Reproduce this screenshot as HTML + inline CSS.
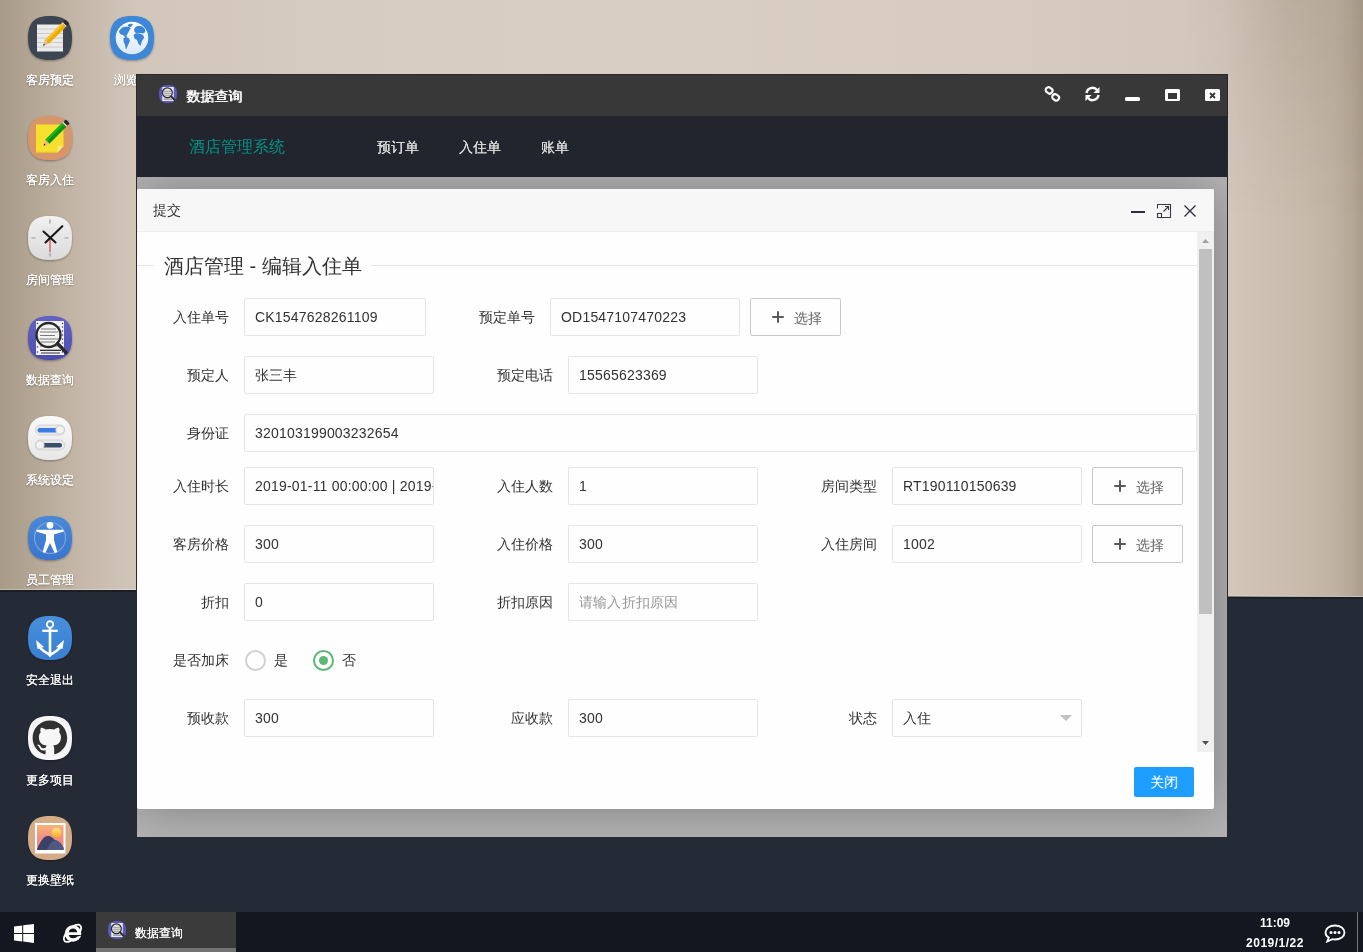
<!DOCTYPE html>
<html><head><meta charset="utf-8">
<style>
*{margin:0;padding:0;box-sizing:border-box}
html,body{width:1363px;height:952px;overflow:hidden}
body{position:relative;font-family:"Liberation Sans",sans-serif;background:#252b36;}
#root{position:absolute;left:0;top:0;width:1363px;height:952px;opacity:0.999}
.abs{position:absolute}
.dicon{position:absolute;left:28px;width:44px;height:44px;border-radius:14px}
.dlabel{position:absolute;left:10px;width:80px;text-align:center;color:#fff;font-size:12px;line-height:14px;text-shadow:0.4px 0 0 #fff,0 1px 2px rgba(0,0,0,.4)}
/* window */
#win{position:absolute;left:136px;top:74px;width:1092px;height:764px;background:#b5b5b5;border:1px solid #2a2a2a}
#wtitle{position:absolute;left:0;top:0;width:1090px;height:41px;background:#393939}
#wnav{position:absolute;left:0;top:41px;width:1090px;height:61px;background:#23262e}
#wbody{position:absolute;left:0;top:102px;width:1090px;height:660px;background:#b5b5b5}
/* dialog */
#dlg{position:absolute;left:137px;top:189px;width:1077px;height:620px;background:#fff;border-radius:2px;box-shadow:1px 1px 50px rgba(0,0,0,.3);clip-path:inset(-12px -13px -28px 0)}
#dhead{position:absolute;left:0;top:0;width:1077px;height:43px;background:#f8f8f8;border-bottom:1px solid #eee;border-radius:2px 2px 0 0}
.lbl{position:absolute;font-size:14px;color:#333;text-align:right;line-height:20px;white-space:nowrap}
.inp{position:absolute;letter-spacing:0.2px;height:38px;border:1px solid #e6e6e6;border-radius:2px;background:#fff;font-size:14px;color:#333;line-height:36px;padding-left:10px;white-space:nowrap;overflow:hidden}
.btn{position:absolute;height:38px;border:1px solid #c9c9c9;border-radius:2px;background:#fff;font-size:14px;color:#555;line-height:36px;}
#taskbar{position:absolute;left:0;top:912px;width:1363px;height:40px;background:#151820}
.plus{position:absolute;left:21px;top:12px;width:12px;height:12px}
.plus:before{content:"";position:absolute;left:0;top:5px;width:12px;height:2px;background:#5a5a5a;border-radius:1px}
.plus:after{content:"";position:absolute;left:5px;top:0;width:2px;height:12px;background:#5a5a5a;border-radius:1px}
.caret{position:absolute;left:167px;top:15px;width:0;height:0;border-left:6px solid transparent;border-right:6px solid transparent;border-top:6px solid #c2c2c2}
</style></head><body><div id="root">
<svg id="wallsvg" class="abs" style="left:0;top:0" width="1363" height="602" viewBox="0 0 1363 602"><defs><linearGradient id="wg" x1="0" y1="0" x2="1" y2="0"><stop offset="0%" stop-color="#a99b89"/><stop offset="2.2%" stop-color="#b3a694"/><stop offset="4.4%" stop-color="#bfb2a2"/><stop offset="7%" stop-color="#cabdb0"/><stop offset="10%" stop-color="#d3c7bc"/><stop offset="25%" stop-color="#d8cdc3"/><stop offset="45%" stop-color="#dacfc5"/><stop offset="70%" stop-color="#d9cdc2"/><stop offset="90%" stop-color="#d4c8bc"/><stop offset="95.4%" stop-color="#c9bcae"/><stop offset="98%" stop-color="#c0b3a3"/><stop offset="99.3%" stop-color="#b5a795"/><stop offset="100%" stop-color="#ab9d8b"/></linearGradient><linearGradient id="tr" x1="0" y1="0" x2="1" y2="0"><stop offset="0" stop-color="#3c2d1e" stop-opacity="0"/><stop offset="0.6" stop-color="#3c2d1e" stop-opacity=".1"/><stop offset="1" stop-color="#3c2d1e" stop-opacity=".06"/></linearGradient><linearGradient id="trm" x1="0" y1="0" x2="0" y2="1"><stop offset="0" stop-color="#fff"/><stop offset="1" stop-color="#000"/></linearGradient><mask id="m1"><rect x="1180" y="0" width="183" height="220" fill="url(#trm)"/></mask></defs><path d="M0 0H1363V597L1230 596.5L136 590H0Z" fill="url(#wg)"/><rect x="1180" y="0" width="183" height="220" fill="url(#tr)" mask="url(#m1)"/><path d="M0 589.5H136L1230 596L1363 596.5" fill="none" stroke="#fff" stroke-opacity=".3" stroke-width="1"/><path d="M0 591H136L1230 597.5L1363 598" fill="none" stroke="#000" stroke-opacity=".3" stroke-width="2"/></svg>

<!-- desktop icons -->
<!--ICONS-->
<svg class="abs" style="left:25px;top:14px" width="50" height="50" viewBox="-3 -2 50 50"><defs><filter id="sh0" x="-20%" y="-20%" width="140%" height="140%"><feGaussianBlur in="SourceAlpha" stdDeviation="1.2"/><feOffset dy="1"/><feComponentTransfer><feFuncA type="linear" slope="0.35"/></feComponentTransfer><feMerge><feMergeNode/><feMergeNode in="SourceGraphic"/></feMerge></filter></defs><g filter="url(#sh0)"><path d="M22 0C37.5 0 44 6.5 44 22C44 37.5 37.5 44 22 44C6.5 44 0 37.5 0 22C0 6.5 6.5 0 22 0Z" fill="#3e4653"/>
<rect x="9" y="8.5" width="26" height="27" fill="#ececec"/>
<g stroke="#c4c4c4" stroke-width="0.8"><path d="M9 13H35M9 17.5H35M9 22H35M9 26.5H35M9 31H35"/></g>
<g transform="rotate(-45 27.2 17.6)"><rect x="15.5" y="14.8" width="24" height="5.6" fill="#f0ad00"/><rect x="15.5" y="14.8" width="24" height="2.2" fill="#f8c52a"/><rect x="39.5" y="14.8" width="1.4" height="5.6" fill="#ddd"/><rect x="40.9" y="14.8" width="3.5" height="5.6" rx="1" fill="#2a2a2a"/><path d="M15.5 14.8L10 17.6L15.5 20.4Z" fill="#f2b48a"/><path d="M12 16.6L10 17.6L12 18.6Z" fill="#222"/></g></g></svg>
<svg class="abs" style="left:25px;top:114px" width="50" height="50" viewBox="-3 -2 50 50"><defs><filter id="sh1" x="-20%" y="-20%" width="140%" height="140%"><feGaussianBlur in="SourceAlpha" stdDeviation="1.2"/><feOffset dy="1"/><feComponentTransfer><feFuncA type="linear" slope="0.35"/></feComponentTransfer><feMerge><feMergeNode/><feMergeNode in="SourceGraphic"/></feMerge></filter></defs><g filter="url(#sh1)"><path d="M22 0C37.5 0 44 6.5 44 22C44 37.5 37.5 44 22 44C6.5 44 0 37.5 0 22C0 6.5 6.5 0 22 0Z" fill="#d8966a"/>
<path d="M8 8.5H35.5V30L29.5 36.5H8Z" fill="#f8e12e"/>
<path d="M8 35.5H29.5V37H8Z" fill="#e8c820" opacity=".6"/>
<path d="M29.5 36.5L35.5 30H30.5Q29.5 30 29.5 31Z" fill="#f9ec78"/>
<g transform="rotate(-45 27.6 17.6)"><rect x="16" y="14.8" width="24" height="5.6" fill="#0e960f"/><rect x="16" y="14.8" width="24" height="2.2" fill="#1fb51f"/><rect x="40" y="14.8" width="1.4" height="5.6" fill="#ddd"/><rect x="41.4" y="14.8" width="3.5" height="5.6" rx="1" fill="#2a2a2a"/><path d="M16 14.8L10.5 17.6L16 20.4Z" fill="#f5b48a"/><path d="M12.5 16.6L10.5 17.6L12.5 18.6Z" fill="#222"/></g></g></svg>
<svg class="abs" style="left:25px;top:214px" width="50" height="50" viewBox="-3 -2 50 50"><defs><filter id="sh2" x="-20%" y="-20%" width="140%" height="140%"><feGaussianBlur in="SourceAlpha" stdDeviation="1.2"/><feOffset dy="1"/><feComponentTransfer><feFuncA type="linear" slope="0.35"/></feComponentTransfer><feMerge><feMergeNode/><feMergeNode in="SourceGraphic"/></feMerge></filter></defs><g filter="url(#sh2)"><defs><linearGradient id="g3" x1="0" y1="0" x2="0" y2="1"><stop offset="0" stop-color="#f2f2f2"/><stop offset="1" stop-color="#dcdcdc"/></linearGradient></defs>
<path d="M22 0C37.5 0 44 6.5 44 22C44 37.5 37.5 44 22 44C6.5 44 0 37.5 0 22C0 6.5 6.5 0 22 0Z" fill="url(#g3)"/>
<rect x="11" y="11" width="22" height="22" rx="8" fill="#e6e6e6" opacity=".7"/>
<g stroke="#9a9a9a" stroke-width="1.2"><path d="M22 3.5V7.5M22 36.5V40.5M3.5 22H7.5M36.5 22H40.5"/></g>
<path d="M22 20V36" stroke="#e06060" stroke-width="1.5"/>
<g stroke="#1a1a1a" stroke-width="2.1" stroke-linecap="round"><path d="M15.5 15.5L27.5 26.5M17.5 26.5L34.3 10.2"/></g>
<circle cx="22" cy="22" r="1" fill="#111"/></g></svg>
<svg class="abs" style="left:25px;top:314px" width="50" height="50" viewBox="-3 -2 50 50"><defs><filter id="sh3" x="-20%" y="-20%" width="140%" height="140%"><feGaussianBlur in="SourceAlpha" stdDeviation="1.2"/><feOffset dy="1"/><feComponentTransfer><feFuncA type="linear" slope="0.35"/></feComponentTransfer><feMerge><feMergeNode/><feMergeNode in="SourceGraphic"/></feMerge></filter></defs><g filter="url(#sh3)"><defs><linearGradient id="g4" x1="0" y1="0" x2="0" y2="1"><stop offset="0" stop-color="#6464c4"/><stop offset="1" stop-color="#4e4eb0"/></linearGradient></defs>
<path d="M22 0C37.5 0 44 6.5 44 22C44 37.5 37.5 44 22 44C6.5 44 0 37.5 0 22C0 6.5 6.5 0 22 0Z" fill="url(#g4)"/>
<rect x="8" y="5" width="28" height="34" fill="#f4f4f4"/>
<g fill="#3d3da8"><circle cx="9.5" cy="7.5" r=".8"/><circle cx="9.5" cy="15" r=".8"/><circle cx="9.5" cy="19" r=".8"/><circle cx="9.5" cy="31" r=".8"/><circle cx="9.5" cy="36" r=".8"/><circle cx="34.5" cy="7.5" r=".8"/><circle cx="34.5" cy="11" r=".8"/><circle cx="34.5" cy="15" r=".8"/><circle cx="34.5" cy="19" r=".8"/><circle cx="34.5" cy="23" r=".8"/><circle cx="34.5" cy="27" r=".8"/><circle cx="34.5" cy="31" r=".8"/><circle cx="34.5" cy="36" r=".8"/></g>
<g stroke="#777" stroke-width="1"><path d="M12 11H32M12 14H27M12 17H30M12 20H27M12 23H32M12 26H27M12 30H30M12 34H32"/></g>
<circle cx="20.5" cy="19" r="12" fill="#f4f4f4" stroke="#2b2b2b" stroke-width="2.4"/>
<g stroke="#7a7a7a" stroke-width="1.2"><path d="M13 13H28M12 16H30M12 19.5H27M11.5 23H31M12.5 26H27"/></g>
<path d="M29.5 27.5L38 36.5" stroke="#2b2b2b" stroke-width="3.4" stroke-linecap="round"/>
<g stroke="#333" stroke-width="1"><path d="M12 34.5H33M13 37H32"/></g></g></svg>
<svg class="abs" style="left:25px;top:414px" width="50" height="50" viewBox="-3 -2 50 50"><defs><filter id="sh4" x="-20%" y="-20%" width="140%" height="140%"><feGaussianBlur in="SourceAlpha" stdDeviation="1.2"/><feOffset dy="1"/><feComponentTransfer><feFuncA type="linear" slope="0.35"/></feComponentTransfer><feMerge><feMergeNode/><feMergeNode in="SourceGraphic"/></feMerge></filter></defs><g filter="url(#sh4)"><defs><linearGradient id="g5" x1="0" y1="0" x2="0" y2="1"><stop offset="0" stop-color="#fafafa"/><stop offset="1" stop-color="#e8e8e8"/></linearGradient></defs>
<path d="M22 0C37.5 0 44 6.5 44 22C44 37.5 37.5 44 22 44C6.5 44 0 37.5 0 22C0 6.5 6.5 0 22 0Z" fill="url(#g5)"/>
<rect x="7.3" y="9" width="29.5" height="10" rx="5" fill="#e9e9e9" stroke="#cfcfcf" stroke-width=".8"/>
<rect x="9.5" y="12" width="20" height="4.5" rx="2.2" fill="#3a7ee3"/>
<circle cx="32" cy="14" r="4.2" fill="#f4f4f4" stroke="#c8c8c8" stroke-width=".8"/>
<rect x="7.3" y="24" width="29.5" height="10" rx="5" fill="#e9e9e9" stroke="#cfcfcf" stroke-width=".8"/>
<rect x="14" y="27" width="20" height="4.5" rx="2.2" fill="#3b4f6d"/>
<circle cx="12" cy="29" r="4.2" fill="#f4f4f4" stroke="#c8c8c8" stroke-width=".8"/></g></svg>
<svg class="abs" style="left:25px;top:514px" width="50" height="50" viewBox="-3 -2 50 50"><defs><filter id="sh5" x="-20%" y="-20%" width="140%" height="140%"><feGaussianBlur in="SourceAlpha" stdDeviation="1.2"/><feOffset dy="1"/><feComponentTransfer><feFuncA type="linear" slope="0.35"/></feComponentTransfer><feMerge><feMergeNode/><feMergeNode in="SourceGraphic"/></feMerge></filter></defs><g filter="url(#sh5)"><defs><linearGradient id="g6" x1="0" y1="0" x2="0" y2="1"><stop offset="0" stop-color="#4a8ad8"/><stop offset="1" stop-color="#3a76cf"/></linearGradient></defs>
<path d="M22 0C37.5 0 44 6.5 44 22C44 37.5 37.5 44 22 44C6.5 44 0 37.5 0 22C0 6.5 6.5 0 22 0Z" fill="url(#g6)"/>
<circle cx="22" cy="22" r="15.5" fill="none" stroke="#fff" stroke-opacity=".3" stroke-width="1.2"/>
<circle cx="22" cy="9.3" r="3.4" fill="#fff"/>
<path d="M8.5 13.8L35.5 13.8L35.8 15.6L26 18.5V24L29.3 36L26.7 37L22 27L17.3 37L14.7 36L18 24V18.5L8.2 15.6Z" fill="#fff"/></g></svg>
<svg class="abs" style="left:25px;top:614px" width="50" height="50" viewBox="-3 -2 50 50"><defs><filter id="sh6" x="-20%" y="-20%" width="140%" height="140%"><feGaussianBlur in="SourceAlpha" stdDeviation="1.2"/><feOffset dy="1"/><feComponentTransfer><feFuncA type="linear" slope="0.35"/></feComponentTransfer><feMerge><feMergeNode/><feMergeNode in="SourceGraphic"/></feMerge></filter></defs><g filter="url(#sh6)"><defs><linearGradient id="g7" x1="0" y1="0" x2="0" y2="1"><stop offset="0" stop-color="#4890dc"/><stop offset="1" stop-color="#3a80d2"/></linearGradient></defs>
<path d="M22 0C37.5 0 44 6.5 44 22C44 37.5 37.5 44 22 44C6.5 44 0 37.5 0 22C0 6.5 6.5 0 22 0Z" fill="url(#g7)"/>
<circle cx="22" cy="8.4" r="3.2" fill="none" stroke="#fff" stroke-width="1.9"/>
<path d="M14.3 14.8H29.7" stroke="#fff" stroke-width="2.3"/>
<path d="M22 11.5V39" stroke="#fff" stroke-width="2.6"/>
<path d="M11 30.5Q15.5 36 22 38.5Q28.5 36 33 30.5" fill="none" stroke="#fff" stroke-width="2.6"/>
<path d="M22 41.5L18.5 37.2H25.5Z" fill="#fff"/>
<path d="M8 24L9.5 33L16 31Z" fill="#fff"/><path d="M36 24L34.5 33L28 31Z" fill="#fff"/></g></svg>
<svg class="abs" style="left:25px;top:714px" width="50" height="50" viewBox="-3 -2 50 50"><defs><filter id="sh7" x="-20%" y="-20%" width="140%" height="140%"><feGaussianBlur in="SourceAlpha" stdDeviation="1.2"/><feOffset dy="1"/><feComponentTransfer><feFuncA type="linear" slope="0.35"/></feComponentTransfer><feMerge><feMergeNode/><feMergeNode in="SourceGraphic"/></feMerge></filter></defs><g filter="url(#sh7)"><path d="M22 0C37.5 0 44 6.5 44 22C44 37.5 37.5 44 22 44C6.5 44 0 37.5 0 22C0 6.5 6.5 0 22 0Z" fill="#f7f7f7"/>
<g transform="translate(4.6 4.6) scale(2.16)"><path fill="#333" d="M8 0C3.58 0 0 3.58 0 8c0 3.54 2.29 6.53 5.47 7.59.4.07.55-.17.55-.38 0-.19-.01-.82-.01-1.49-2.01.37-2.53-.49-2.69-.94-.09-.23-.48-.94-.82-1.13-.28-.15-.68-.52-.01-.53.63-.01 1.08.58 1.23.82.72 1.21 1.87.87 2.33.66.07-.52.28-.87.51-1.07-1.78-.2-3.64-.89-3.64-3.95 0-.87.31-1.59.82-2.15-.08-.2-.36-1.02.08-2.12 0 0 .67-.21 2.2.82.64-.18 1.32-.27 2-.27.68 0 1.36.09 2 .27 1.53-1.04 2.2-.82 2.2-.82.44 1.1.16 1.92.08 2.12.51.56.82 1.27.82 2.15 0 3.07-1.87 3.75-3.65 3.95.29.25.54.73.54 1.48 0 1.07-.01 1.93-.01 2.2 0 .21.15.46.55.38A8.013 8.013 0 0016 8c0-4.42-3.58-8-8-8z"/></g></g></svg>
<svg class="abs" style="left:25px;top:814px" width="50" height="50" viewBox="-3 -2 50 50"><defs><filter id="sh8" x="-20%" y="-20%" width="140%" height="140%"><feGaussianBlur in="SourceAlpha" stdDeviation="1.2"/><feOffset dy="1"/><feComponentTransfer><feFuncA type="linear" slope="0.35"/></feComponentTransfer><feMerge><feMergeNode/><feMergeNode in="SourceGraphic"/></feMerge></filter></defs><g filter="url(#sh8)"><path d="M22 0C37.5 0 44 6.5 44 22C44 37.5 37.5 44 22 44C6.5 44 0 37.5 0 22C0 6.5 6.5 0 22 0Z" fill="#d5ad88"/>
<defs><linearGradient id="g9" x1="0" y1="0" x2="0" y2="1"><stop offset="0" stop-color="#f8b47a"/><stop offset="0.5" stop-color="#f29182"/><stop offset="1" stop-color="#e88a80"/></linearGradient><linearGradient id="g9s" x1="0" y1="0" x2="0" y2="1"><stop offset="0" stop-color="#fde58a"/><stop offset="1" stop-color="#fbb21a"/></linearGradient></defs>
<rect x="7" y="7" width="30.5" height="30.5" fill="#fff"/>
<rect x="9" y="9" width="26.5" height="25" fill="url(#g9)"/>
<circle cx="28.5" cy="16.5" r="4.8" fill="url(#g9s)"/>
<path d="M9 34C11 28 15 20 20 20C23 20 24.5 22 26 23L9 34Z" fill="#3b4067"/>
<path d="M9 34Q12 26 18 21.5Q20 20 22 21L28 24.5Q32 25 35.5 32V34Z" fill="#3d426a"/>
<path d="M19 34Q22 25 28 24Q32 25 35.5 32V34Z" fill="#525a82"/></g></svg>
<svg class="abs" style="left:107px;top:14px" width="50" height="50" viewBox="-3 -2 50 50"><defs><filter id="sh9" x="-20%" y="-20%" width="140%" height="140%"><feGaussianBlur in="SourceAlpha" stdDeviation="1.2"/><feOffset dy="1"/><feComponentTransfer><feFuncA type="linear" slope="0.35"/></feComponentTransfer><feMerge><feMergeNode/><feMergeNode in="SourceGraphic"/></feMerge></filter></defs><g filter="url(#sh9)"><defs><linearGradient id="g10" x1="0" y1="0" x2="0" y2="1"><stop offset="0" stop-color="#fff"/><stop offset="1" stop-color="#dde9f9"/></linearGradient></defs>
<path d="M22 0C37.5 0 44 6.5 44 22C44 37.5 37.5 44 22 44C6.5 44 0 37.5 0 22C0 6.5 6.5 0 22 0Z" fill="#3c88d9"/>
<circle cx="22" cy="22" r="16.3" fill="url(#g10)"/>
<g fill="#3c88d9">
<path d="M9 15L12 11.5L16 10.5L19 11L21 12L19.5 14L18 17L16.5 19.5L17 22L15.5 21.5L13 19L11 18.5L9.5 17Z"/>
<path d="M17.5 9L20 7.8L23 8L21.5 10.5L19 11.3Z"/>
<path d="M24 13L26 10.5L29 9.7L32.5 10.5L35 13L35.3 16L33 17.5L30 17L27 17.5L24.5 16Z"/>
<path d="M23.5 19L26 17.3L30 17.8L33 19L34.2 21.5L32 25L30.5 29.9L28.5 28L27 24L24.5 22.5Z"/>
<path d="M13.5 22L16.5 21L19 22.5L20 24.5L18.5 28L16 33.7L15 29L13.5 25Z"/>
</g></g></svg>
<!--/ICONS-->
<div class="dlabel" style="top:73px">客房预定</div>
<div class="dlabel" style="top:173px">客房入住</div>
<div class="dlabel" style="top:273px">房间管理</div>
<div class="dlabel" style="top:373px">数据查询</div>
<div class="dlabel" style="top:473px">系统设定</div>
<div class="dlabel" style="top:573px">员工管理</div>
<div class="dlabel" style="top:673px">安全退出</div>
<div class="dlabel" style="top:773px">更多项目</div>
<div class="dlabel" style="top:873px">更换壁纸</div>
<div class="dlabel" style="left:92px;top:73px">浏览器</div>

<!-- window -->
<div id="win">
 <div id="wtitle"></div>
 <div id="wnav"></div>
 <div id="wbody"></div>
</div>
<!-- window content -->
<svg class="abs" style="left:159px;top:85px" width="18" height="18" viewBox="0 0 44 44"><path d="M22 0C37.5 0 44 6.5 44 22C44 37.5 37.5 44 22 44C6.5 44 0 37.5 0 22C0 6.5 6.5 0 22 0Z" fill="#5b5bc0"/><rect x="8" y="5" width="28" height="34" fill="#f0f0f0"/><g stroke="#555" stroke-width="2"><path d="M12 34.5H33"/></g><circle cx="20.5" cy="19" r="12" fill="#e8e8e8" stroke="#2b2b2b" stroke-width="3"/><g stroke="#999" stroke-width="2.5"><path d="M12 15H29M12 20H30M13 25H27"/></g><path d="M29.5 27.5L38 36.5" stroke="#2b2b2b" stroke-width="4.5" stroke-linecap="round"/></svg>
<div class="abs" style="left:186px;top:86px;font-size:14px;line-height:20px;color:#fff;text-shadow:0.5px 0 0 #fff">数据查询</div>
<!-- title bar icons -->
<svg class="abs" style="left:1044px;top:86px" width="17" height="16" viewBox="0 0 17 16"><g fill="none" stroke="#fff" stroke-width="2.2"><rect x="1.6" y="1.6" width="7" height="5.5" rx="2.7" transform="rotate(35 5 4.4)"/><rect x="8.2" y="8.6" width="7" height="5.5" rx="2.7" transform="rotate(35 11.7 11.3)"/></g></svg>
<svg class="abs" style="left:1084px;top:86px" width="17" height="16" viewBox="0 0 17 16"><g fill="none" stroke="#fff" stroke-width="2.4"><path d="M2.5 7A6 6 0 0 1 13.2 4.2"/><path d="M14.5 9A6 6 0 0 1 3.8 11.8"/></g><path d="M15.5 1V7H9.5Z" fill="#fff"/><path d="M1.5 15V9H7.5Z" fill="#fff"/></svg>
<div class="abs" style="left:1125px;top:97px;width:15px;height:4px;background:#fff;border-radius:1.5px"></div>
<div class="abs" style="left:1165px;top:89px;width:15px;height:12px;border:3px solid #fff;border-top-width:4px;border-bottom-width:2px;border-radius:1.5px"></div>
<div class="abs" style="left:1205px;top:89px;width:15px;height:12px;background:#fff;border-radius:1.5px"><svg class="abs" style="left:4px;top:3px" width="7" height="7" viewBox="0 0 7 7"><path d="M1 1L6 6M6 1L1 6" stroke="#393939" stroke-width="1.8"/></svg></div>
<div class="abs" style="left:189px;top:137px;font-size:16px;line-height:20px;color:#009688">酒店管理系统</div>
<div class="abs" style="left:377px;top:137px;font-size:14px;line-height:20px;color:#dcdcdc;text-shadow:0.4px 0 0 #dcdcdc">预订单</div>
<div class="abs" style="left:459px;top:137px;font-size:14px;line-height:20px;color:#dcdcdc;text-shadow:0.4px 0 0 #dcdcdc">入住单</div>
<div class="abs" style="left:541px;top:137px;font-size:14px;line-height:20px;color:#dcdcdc;text-shadow:0.4px 0 0 #dcdcdc">账单</div>


<!-- dialog -->
<div id="dlg">
 <div id="dhead"></div>
</div>
<!-- dialog header icons -->
<div class="abs" style="left:1131px;top:211px;width:14px;height:2px;background:#2e2d3c"></div>
<svg class="abs" style="left:1156px;top:203px" width="16" height="16" viewBox="0 0 16 16"><g fill="none" stroke="#3a3946" stroke-width="1.1"><path d="M1.5 5.5V1.5H14.5V14.5H5.5"/><rect x="1.5" y="10.5" width="4" height="4"/><path d="M7.5 8.5L12.5 3.5M9 3.5H12.5V7"/></g></svg>
<svg class="abs" style="left:1183px;top:204px" width="14" height="14" viewBox="0 0 14 14"><path d="M1.5 1.5L12.5 12.5M12.5 1.5L1.5 12.5" stroke="#2e2d3c" stroke-width="1.3" fill="none"/></svg>
<div class="abs" style="left:153px;top:200px;font-size:14px;line-height:20px;color:#333">提交</div>
<!-- fieldset -->
<div class="abs" style="left:137px;top:265px;width:17px;height:1px;background:#e6e6e6"></div>
<div class="abs" style="left:371px;top:265px;width:826px;height:1px;background:#e6e6e6"></div>
<div class="abs" style="left:164px;top:252px;font-size:20px;line-height:28px;color:#333">酒店管理 - 编辑入住单</div>
<div class="lbl" style="right:1134px;top:307px">入住单号</div>
<div class="inp" style="left:244px;top:298px;width:182px;">CK1547628261109</div>
<div class="lbl" style="right:828px;top:307px">预定单号</div>
<div class="inp" style="left:550px;top:298px;width:190px;">OD1547107470223</div>
<div class="btn" style="left:750px;top:298px;width:91px"><span class="plus"></span><span class="abs" style="left:43px;top:1px;color:#666">选择</span></div>
<div class="lbl" style="right:1134px;top:365px">预定人</div>
<div class="inp" style="left:244px;top:356px;width:190px;">张三丰</div>
<div class="lbl" style="right:810px;top:365px">预定电话</div>
<div class="inp" style="left:568px;top:356px;width:190px;">15565623369</div>
<div class="lbl" style="right:1134px;top:423px">身份证</div>
<div class="inp" style="left:244px;top:414px;width:953px;">320103199003232654</div>
<div class="lbl" style="right:1134px;top:476px">入住时长</div>
<div class="inp" style="left:244px;top:467px;width:190px;">2019-01-11 00:00:00 | 2019-01-12 00:00:00</div>
<div class="lbl" style="right:810px;top:476px">入住人数</div>
<div class="inp" style="left:568px;top:467px;width:190px;">1</div>
<div class="lbl" style="right:486px;top:476px">房间类型</div>
<div class="inp" style="left:892px;top:467px;width:190px;">RT190110150639</div>
<div class="btn" style="left:1092px;top:467px;width:91px"><span class="plus"></span><span class="abs" style="left:43px;top:1px;color:#666">选择</span></div>
<div class="lbl" style="right:1134px;top:534px">客房价格</div>
<div class="inp" style="left:244px;top:525px;width:190px;">300</div>
<div class="lbl" style="right:810px;top:534px">入住价格</div>
<div class="inp" style="left:568px;top:525px;width:190px;">300</div>
<div class="lbl" style="right:486px;top:534px">入住房间</div>
<div class="inp" style="left:892px;top:525px;width:190px;">1002</div>
<div class="btn" style="left:1092px;top:525px;width:91px"><span class="plus"></span><span class="abs" style="left:43px;top:1px;color:#666">选择</span></div>
<div class="lbl" style="right:1134px;top:592px">折扣</div>
<div class="inp" style="left:244px;top:583px;width:190px;">0</div>
<div class="lbl" style="right:810px;top:592px">折扣原因</div>
<div class="inp" style="left:568px;top:583px;width:190px;"><span style="color:#999">请输入折扣原因</span></div>
<div class="lbl" style="right:1134px;top:650px">是否加床</div>
<div class="abs" style="left:245px;top:650px;width:21px;height:21px;border:2px solid #d2d2d2;border-radius:50%"></div>
<div class="abs" style="left:274px;top:650px;font-size:14px;line-height:20px;color:#333">是</div>
<div class="abs" style="left:313px;top:650px;width:21px;height:21px;border:2px solid #5FB878;border-radius:50%"><div class="abs" style="left:4px;top:4px;width:9px;height:9px;border-radius:50%;background:#5FB878"></div></div>
<div class="abs" style="left:342px;top:650px;font-size:14px;line-height:20px;color:#333">否</div>
<div class="lbl" style="right:1134px;top:708px">预收款</div>
<div class="inp" style="left:244px;top:699px;width:190px;">300</div>
<div class="lbl" style="right:810px;top:708px">应收款</div>
<div class="inp" style="left:568px;top:699px;width:190px;">300</div>
<div class="lbl" style="right:486px;top:708px">状态</div>
<div class="inp" style="left:892px;top:699px;width:190px;">入住<span class="caret"></span></div>
<div class="abs" style="left:1197px;top:232px;width:17px;height:520px;background:#f1f1f1"></div>
<div class="abs" style="left:1199px;top:249px;width:13px;height:365px;background:#c1c1c1"></div>
<svg class="abs" style="left:1201px;top:238px" width="10" height="6" viewBox="0 0 10 6"><path d="M1 5L4.5 1L8 5Z" fill="#a3a3a3"/></svg>
<svg class="abs" style="left:1201px;top:740px" width="10" height="6" viewBox="0 0 10 6"><path d="M1 1L4.5 5L8 1Z" fill="#505050"/></svg>
<div class="abs" style="left:1134px;top:767px;width:60px;height:30px;background:#1E9FFF;border-radius:2px;color:#fff;font-size:14px;font-weight:500;line-height:30px;text-align:center">关闭</div>


<div id="taskbar"></div>
<!-- windows logo -->
<svg class="abs" style="left:14px;top:924px" width="20" height="19" viewBox="0 0 20 19"><path d="M0 2.6L8.2 1.5V8.9H0ZM9.2 1.3L20 0V8.9H9.2ZM0 9.9H8.2V17.5L0 16.4ZM9.2 9.9H20V19L9.2 17.6Z" fill="#fff"/></svg>
<!-- IE -->
<svg class="abs" style="left:62px;top:923px" width="21" height="21" viewBox="0 0 21 21"><ellipse cx="10.5" cy="10.3" rx="11" ry="5.2" transform="rotate(-45 10.5 10.3)" fill="none" stroke="#fff" stroke-width="1.8"/><circle cx="11" cy="10.5" r="8.3" fill="#fff"/><path d="M6.8 9.2Q7.2 5.4 11 5.4Q14.8 5.4 15.2 9.2Z" fill="#151820"/><path d="M6.8 12Q7.6 15.2 11 15.2Q14 15.2 15.5 13.6L21 12Z" fill="#151820"/></svg>
<!-- active task -->
<div class="abs" style="left:96px;top:912px;width:140px;height:40px;background:#3c3c3c"></div>
<div class="abs" style="left:96px;top:948px;width:140px;height:4px;background:#737373"></div>
<svg class="abs" style="left:108px;top:921px" width="18" height="18" viewBox="0 0 44 44"><path d="M22 0C37.5 0 44 6.5 44 22C44 37.5 37.5 44 22 44C6.5 44 0 37.5 0 22C0 6.5 6.5 0 22 0Z" fill="#5b5bc0"/><rect x="8" y="5" width="28" height="34" fill="#f0f0f0"/><g stroke="#555" stroke-width="2"><path d="M12 34.5H33"/></g><circle cx="20.5" cy="19" r="12" fill="#e8e8e8" stroke="#2b2b2b" stroke-width="3"/><g stroke="#999" stroke-width="2.5"><path d="M12 15H29M12 20H30M13 25H27"/></g><path d="M29.5 27.5L38 36.5" stroke="#2b2b2b" stroke-width="4.5" stroke-linecap="round"/></svg>
<div class="abs" style="left:135px;top:923px;font-size:12px;line-height:20px;color:#fff;text-shadow:0.4px 0 0 #fff">数据查询</div>
<!-- clock -->
<div class="abs" style="left:1240px;top:914px;width:70px;text-align:center;font-size:12px;font-weight:bold;line-height:18px;color:#fff">11:09</div>
<div class="abs" style="left:1240px;top:934px;width:70px;text-align:center;font-size:12px;font-weight:bold;letter-spacing:0.5px;line-height:18px;color:#fff">2019/1/22</div>
<svg class="abs" style="left:1324px;top:924px" width="22" height="19" viewBox="0 0 22 19"><path d="M11 1.5C5.5 1.5 1.5 4.5 1.5 8.5C1.5 10.8 2.8 12.5 4.8 13.6L3.2 17.5L8.5 15.2C9.3 15.4 10.1 15.5 11 15.5C16.5 15.5 20.5 12.5 20.5 8.5C20.5 4.5 16.5 1.5 11 1.5Z" fill="none" stroke="#fff" stroke-width="1.8"/><circle cx="7" cy="8.5" r="1.5" fill="#fff"/><circle cx="11" cy="8.5" r="1.5" fill="#fff"/><circle cx="15" cy="8.5" r="1.5" fill="#fff"/></svg>
<div class="abs" style="left:1357px;top:912px;width:1px;height:40px;background:#777"></div>

</div></body></html>
